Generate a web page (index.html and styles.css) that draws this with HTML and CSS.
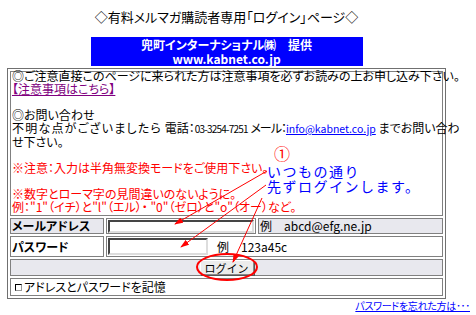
FILE: index.html
```html
<!DOCTYPE html>
<html lang="ja">
<head>
    <meta charset="UTF-8">
    <title>有料メルマガ購読者専用「ログイン」ページ</title>
    <link rel="stylesheet" href="styles.css">
</head>
<body>
    <div class="page">
        <h1 class="title">◇有料メルマガ購読者専用「ログイン」ページ◇</h1>
        <div class="provider">兜町インターナショナル㈱　提供<br>www.kabnet.co.jp</div>

        <form class="login">
            <table class="frame">
                <col class="col-label">
                <col class="col-input">
                <col>
                <tr>
                    <td colspan="3" class="notice">
                        <p>
                        ◎ご注意直接このページに来られた方は注意事項を必ずお読みの上お申し込み下さい。<br>
                        <a href="#" class="visited">【注意事項はこちら】</a><br>
                        <br>
                        ◎お問い合わせ<br>
                        <span class="wide">不明な点がございましたら</span> 電話：<span class="tel">03-3254-7251</span> <span class="tight">メール：</span><a href="#" class="mailto">info@kabnet.co.jp</a> までお問い合わ<br>
                        せ下さい。<br>
                        <br>
                        <span class="warn">※注意：入力は半角無変換モードをご使用下さい。<br>
                        <br>
                        ※数字とローマ字の見間違いのないように。<br>
                        例："1"（イチ）と"l"（エル）・ "0"（ゼロ）と"o"（オー）など。</span>
                        </p>
                    </td>
                </tr>
                <tr class="row-mail">
                    <th>メールアドレス</th>
                    <td><div class="field"><input type="text" class="mail"></div></td>
                    <td class="hint grey">例　abcd@efg.ne.jp</td>
                </tr>
                <tr class="row-pass">
                    <th class="plain">パスワード</th>
                    <td colspan="2"><div class="field"><input type="password" class="pass"><span class="hint">例　123a45c</span></div></td>
                </tr>
                <tr>
                    <td colspan="3" class="submit"><div class="field"><button type="submit">ログイン</button></div></td>
                </tr>
                <tr>
                    <td colspan="3" class="remember"><label class="field"><input type="checkbox">アドレスとパスワードを記憶</label></td>
                </tr>
            </table>
        </form>

        <div class="forgot"><a href="#">パスワードを忘れた方は･･･</a></div>
    </div>

    <div class="memo">
        <div class="memo-num">①</div>
        いつもの通り<br>先ずログインします。
    </div>

    <svg class="marks" width="476" height="315" viewBox="0 0 476 315">
        <defs>
            <marker id="head" markerWidth="9" markerHeight="6" refX="8" refY="3" orient="auto">
                <path d="M0,0 L9,3 L0,6 z" fill="#f00"/>
            </marker>
        </defs>
        <line x1="267" y1="171" x2="175" y2="224" stroke="#f00" marker-end="url(#head)"/>
        <line x1="266" y1="185" x2="181" y2="247" stroke="#f00" marker-end="url(#head)"/>
        <line x1="262" y1="198" x2="233" y2="262" stroke="#f00" marker-end="url(#head)"/>
        <ellipse cx="227" cy="267" rx="30" ry="13" fill="none" stroke="#f00" stroke-width="2"/>
    </svg>
</body>
</html>
```

FILE: styles.css
```css
body {
    margin: 0;
    position: relative;
    width: 476px;
    height: 315px;
    overflow: hidden;
    background: #fff;
    color: #000;
    font-family: "Noto Sans CJK JP", "Liberation Sans", sans-serif;
    font-size: 12px;
    font-feature-settings: "palt";
}

.page {
    width: 439px;
    margin-left: 7px;
}

.title {
    margin: 0;
    padding-top: 10px;
    font-size: 13px;
    font-weight: normal;
    line-height: 14px;
    text-align: center;
}

.provider {
    width: 272px;
    height: 28px;
    margin: 13px auto 0;
    padding: 1px 0 0;
    background: #00f;
    color: #fff;
    font-weight: bold;
    line-height: 14px;
    text-align: center;
}

.login {
    margin: 2px 0 0;
}

.frame {
    width: 439px;
    table-layout: fixed;
    border-collapse: separate;
    border-spacing: 2px;
    border: 1px solid #707070;
}

.col-label {
    width: 94px;
}

.col-input {
    width: 150px;
}

.frame td,
.frame th {
    border: 1px solid #808080;
    background: #fff;
    padding: 0 1px;
    text-align: left;
    white-space: nowrap;
}

.field {
    display: flex;
    align-items: center;
}

.notice {
    line-height: 13px;
}

.notice p {
    margin: -3px 0 2px;
}

.notice a {
    color: #00f;
}

.notice a.visited {
    color: #800080;
}

.wide {
    letter-spacing: 1.2px;
}

.tel {
    font-size: 10px;
    letter-spacing: -0.8px;
}

.tight {
    letter-spacing: -1px;
}

.mailto {
    font-size: 10.5px;
}

.warn {
    color: #f00;
}

.frame th {
    background: #e8e8ee;
    font-weight: bold;
}

.frame th.plain {
    background: #fff;
}

.frame .grey {
    background: #e8e8ee;
}

.hint {
    padding-left: 6px;
}

.row-mail th,
.row-mail td {
    height: 14px;
    line-height: 14px;
}

.row-mail .field {
    height: 14px;
}

.row-pass th {
    line-height: 19px;
}

.row-pass .field {
    height: 19px;
}

input[type="text"],
input[type="password"] {
    box-sizing: border-box;
    margin: 0;
    padding: 0;
    border: 2px inset #999;
    border-right-color: #ddd;
    border-bottom-color: #ddd;
    background: #fff;
}

.mail {
    width: 146px;
    height: 13px;
}

.pass {
    width: 100px;
    height: 17px;
}

.row-pass .hint {
    padding-left: 9px;
    line-height: 14px;
}

.frame td.submit {
    background: #e8e8ee;
}

.submit .field {
    height: 15px;
    justify-content: center;
}

.submit button {
    height: 15px;
    padding: 0 4px;
    border: 1px solid #888;
    border-top-color: #fff;
    border-left-color: #fff;
    background: #ececec;
    box-shadow: 1px 1px 0 #555;
    font-family: inherit;
    font-size: 11px;
    line-height: 12px;
}

.frame td.remember {
    padding-left: 3px;
}

.remember .field {
    height: 16px;
    line-height: 14px;
}

.remember input {
    appearance: none;
    width: 7px;
    height: 7px;
    margin: 0 2px 0 1px;
    border: 1px solid #000;
    border-right-color: #999;
    border-bottom-color: #999;
    background: #fff;
}

.forgot {
    margin: 1px -24px 0 0;
    text-align: right;
    font-size: 10px;
    line-height: 11px;
    letter-spacing: -0.3px;
}

.forgot a {
    color: #00f;
}

/* hand-written note over the screenshot */
.memo {
    position: absolute;
    left: 267px;
    top: 164px;
    color: #00f;
    font-size: 14px;
    line-height: 15px;
    letter-spacing: 1.5px;
    font-feature-settings: normal;
}

.memo-num {
    position: absolute;
    left: 7px;
    top: -18px;
    color: #f00;
    font-size: 16px;
}

.marks {
    position: absolute;
    left: 0;
    top: 0;
    pointer-events: none;
}
```
